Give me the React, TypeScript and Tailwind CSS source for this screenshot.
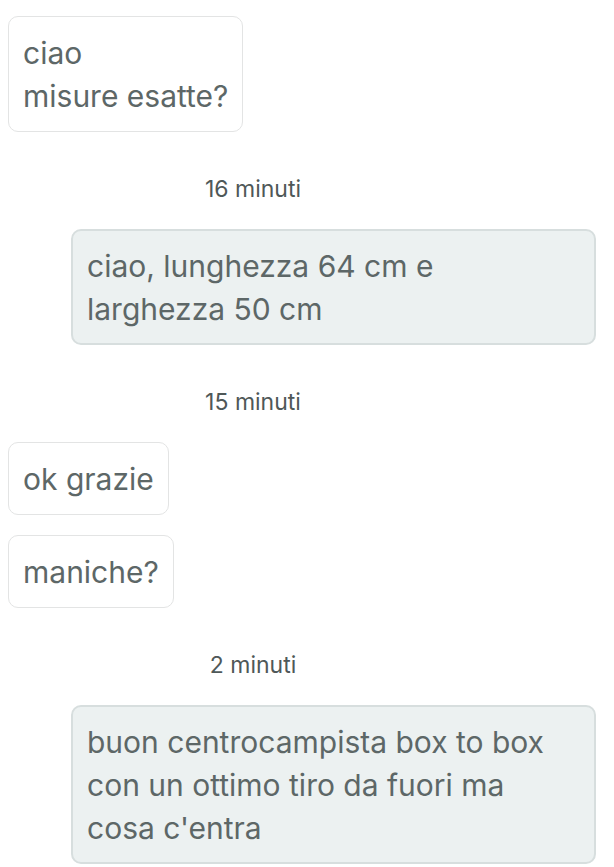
import React from "react";

// Messaggi della chat
type Msg =
  | { kind: "in"; lines: string[] }
  | { kind: "out"; text: string }
  | { kind: "time"; label: string };

const messages: Msg[] = [
  { kind: "in", lines: ["ciao", "misure esatte?"] },
  { kind: "time", label: "16 minuti" },
  { kind: "out", text: "ciao, lunghezza 64 cm e larghezza 50 cm" },
  { kind: "time", label: "15 minuti" },
  { kind: "in", lines: ["ok grazie"] },
  { kind: "in", lines: ["maniche?"] },
  { kind: "time", label: "2 minuti" },
  { kind: "out", text: "buon centrocampista box to box con un ottimo tiro da fuori ma cosa c'entra" },
];

function Incoming({ lines }: { lines: string[] }) {
  return (
    <div className="w-fit rounded-[10px] border border-[#e3e4e4] bg-white pl-[14px] pr-[14px] pt-[15px] pb-[13px] text-[30px] leading-[43px] text-[#5d6767]">
      {lines.map((l, i) => (
        <div key={i}>{l}</div>
      ))}
    </div>
  );
}

function Outgoing({ text }: { text: string }) {
  return (
    <div className="ml-auto mr-[18px] w-[525px] rounded-[10px] border-2 border-[#d7dede] bg-[#ecf1f1] pl-[14px] pr-[36px] pt-[14px] pb-[12px] text-[30px] leading-[43px] text-[#5d6767]">
      {text}
    </div>
  );
}

function Stamp({ label }: { label: string }) {
  return (
    <div className="mt-[43px] mb-[26px] w-[490px] text-center text-[23px] leading-[28px] text-[#4f5858]">
      {label}
    </div>
  );
}

export default function App() {
  return (
    <div
      className="min-h-screen bg-white pl-2 pt-4"
      style={{ fontFamily: "Inter, 'Noto Sans', sans-serif" }}
    >
      <div className="flex flex-col">
        {messages.map((m, i) => {
          if (m.kind === "time") return <Stamp key={i} label={m.label} />;
          if (m.kind === "out") return <Outgoing key={i} text={m.text} />;
          const prevIn = i > 0 && messages[i - 1].kind === "in";
          return (
            <div key={i} className={prevIn ? "mt-5" : ""}>
              <Incoming lines={m.lines} />
            </div>
          );
        })}
      </div>
    </div>
  );
}
